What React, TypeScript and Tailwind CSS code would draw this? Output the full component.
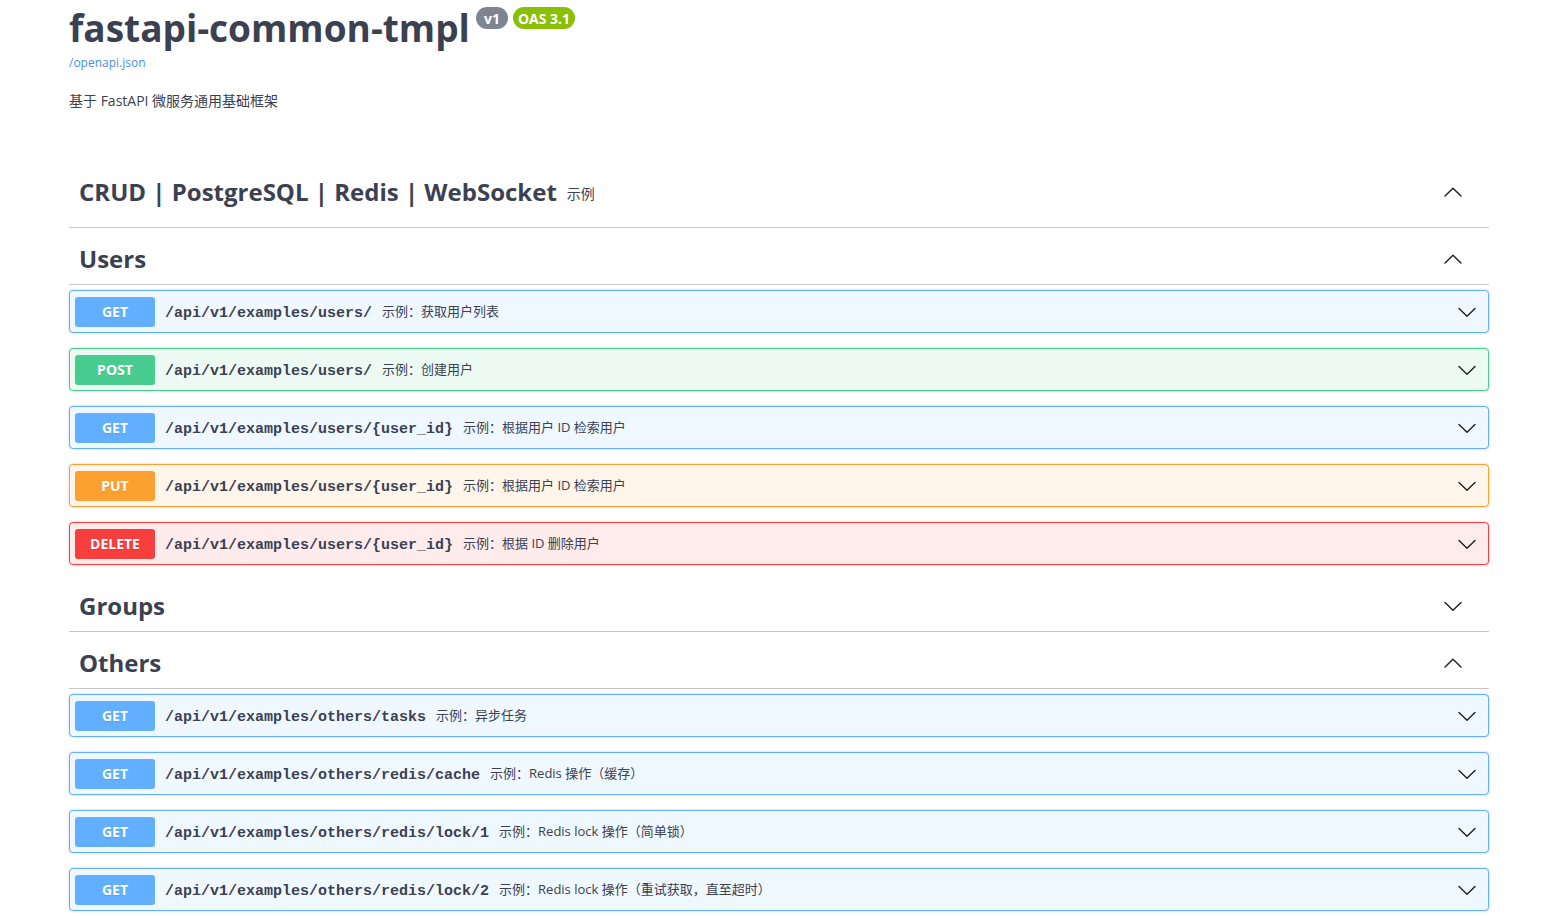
import React from "react";

type Method = "GET" | "POST" | "PUT" | "DELETE";

const methodStyles: Record<Method, { badge: string; block: string }> = {
    GET: { badge: "bg-[#61affe]", block: "border-[#61affe] bg-[#eff7ff]" },
    POST: { badge: "bg-[#49cc90]", block: "border-[#49cc90] bg-[#edfaf4]" },
    PUT: { badge: "bg-[#fca130]", block: "border-[#fca130] bg-[#fff5ea]" },
    DELETE: { badge: "bg-[#f93e3e]", block: "border-[#f93e3e] bg-[#feebeb]" },
};

const sans = { fontFamily: '"Open Sans", "Noto Sans CJK SC", sans-serif' };

// Swagger style chevron, drawn as a thin stroke
function Chevron({ up = false }: { up?: boolean }) {
    return (
        <svg width="20" height="20" viewBox="0 0 20 20" className="shrink-0">
            <polyline
                points={up ? "2,14 10,6.2 18,14" : "2,6.5 10,14.3 18,6.5"}
                fill="none"
                stroke="#1f1f1f"
                strokeWidth="1.4"
                strokeLinecap="round"
                strokeLinejoin="round"
            />
        </svg>
    );
}

function TagHeader({
    title,
    note,
    open,
    tall = false,
}: {
    title: string;
    note?: string;
    open: boolean;
    tall?: boolean;
}) {
    return (
        <div
            className={`flex items-center border-b border-[#c4c6cb] pl-[10px] pr-[26px] mb-[5px] ${
                tall ? "h-[64px] pb-[8px]" : "h-[52px]"
            }`}
        >
            <h3 className="text-[24px] font-bold text-[#3b4151] leading-none">{title}</h3>
            {note && <small className="ml-[10px] mt-[3px] text-[14px] text-[#3b4151]">{note}</small>}
            <div className="flex-1" />
            <Chevron up={open} />
        </div>
    );
}

function OpBlock({ method, path, desc }: { method: Method; path: string; desc: string }) {
    const s = methodStyles[method];
    return (
        <div
            className={`mb-[15px] flex h-[43px] items-center rounded-[4px] border px-[5px] shadow-[0_0_3px_rgba(0,0,0,0.19)] ${s.block}`}
        >
            <span
                className={`flex h-[30px] w-[80px] shrink-0 items-center justify-center rounded-[3px] text-[14px] font-bold text-white [text-shadow:0_1px_0_rgba(0,0,0,0.1)] ${s.badge}`}
            >
                {method}
            </span>
            <span
                className="px-[10px] pt-[6px] text-[15px] font-bold text-[#3b4151]"
                style={{ fontFamily: '"Liberation Mono", monospace' }}
            >
                {path}
            </span>
            <span className="pt-[1px] text-[13px] text-[#3b4151]">{desc}</span>
            <div className="flex-1" />
            <span className="mr-[6px]">
                <Chevron />
            </span>
        </div>
    );
}

const users: { method: Method; path: string; desc: string }[] = [
    { method: "GET", path: "/api/v1/examples/users/", desc: "示例：获取用户列表" },
    { method: "POST", path: "/api/v1/examples/users/", desc: "示例：创建用户" },
    { method: "GET", path: "/api/v1/examples/users/{user_id}", desc: "示例：根据用户 ID 检索用户" },
    { method: "PUT", path: "/api/v1/examples/users/{user_id}", desc: "示例：根据用户 ID 检索用户" },
    { method: "DELETE", path: "/api/v1/examples/users/{user_id}", desc: "示例：根据 ID 删除用户" },
];

const others: { method: Method; path: string; desc: string }[] = [
    { method: "GET", path: "/api/v1/examples/others/tasks", desc: "示例：异步任务" },
    { method: "GET", path: "/api/v1/examples/others/redis/cache", desc: "示例：Redis 操作（缓存）" },
    { method: "GET", path: "/api/v1/examples/others/redis/lock/1", desc: "示例：Redis lock 操作（简单锁）" },
    { method: "GET", path: "/api/v1/examples/others/redis/lock/2", desc: "示例：Redis lock 操作（重试获取，直至超时）" },
];

export default function App() {
    return (
        <div className="min-h-screen bg-white pl-[69px] pr-[56px] text-[#3b4151]" style={sans}>
            {/* Info */}
            <div className="pb-[53px]">
                <div className="mt-[4px] flex items-start">
                    <h2 className="text-[37px] font-bold leading-[48px]">fastapi-common-tmpl</h2>
                    <span className="ml-[6px] mt-[3px] flex h-[22px] items-center rounded-full bg-[#7d8492] px-[8px] text-[14px] font-bold text-white">
                        v1
                    </span>
                    <span className="ml-[5px] mt-[3px] flex h-[22px] items-center rounded-full bg-[#89bf04] px-[5px] text-[14px] font-bold text-white">
                        OAS 3.1
                    </span>
                </div>
                <a className="mt-[2px] block text-[12px] text-[#4990e2]">/openapi.json</a>
                <p className="mt-[18px] text-[14px]">基于 FastAPI 微服务通用基础框架</p>
            </div>

            <TagHeader title="CRUD | PostgreSQL | Redis | WebSocket" note="示例" open tall />

            <TagHeader title="Users" open />
            {users.map((op, i) => (
                <OpBlock key={i} {...op} />
            ))}

            <TagHeader title="Groups" open={false} />

            <TagHeader title="Others" open />
            {others.map((op, i) => (
                <OpBlock key={i} {...op} />
            ))}
        </div>
    );
}
